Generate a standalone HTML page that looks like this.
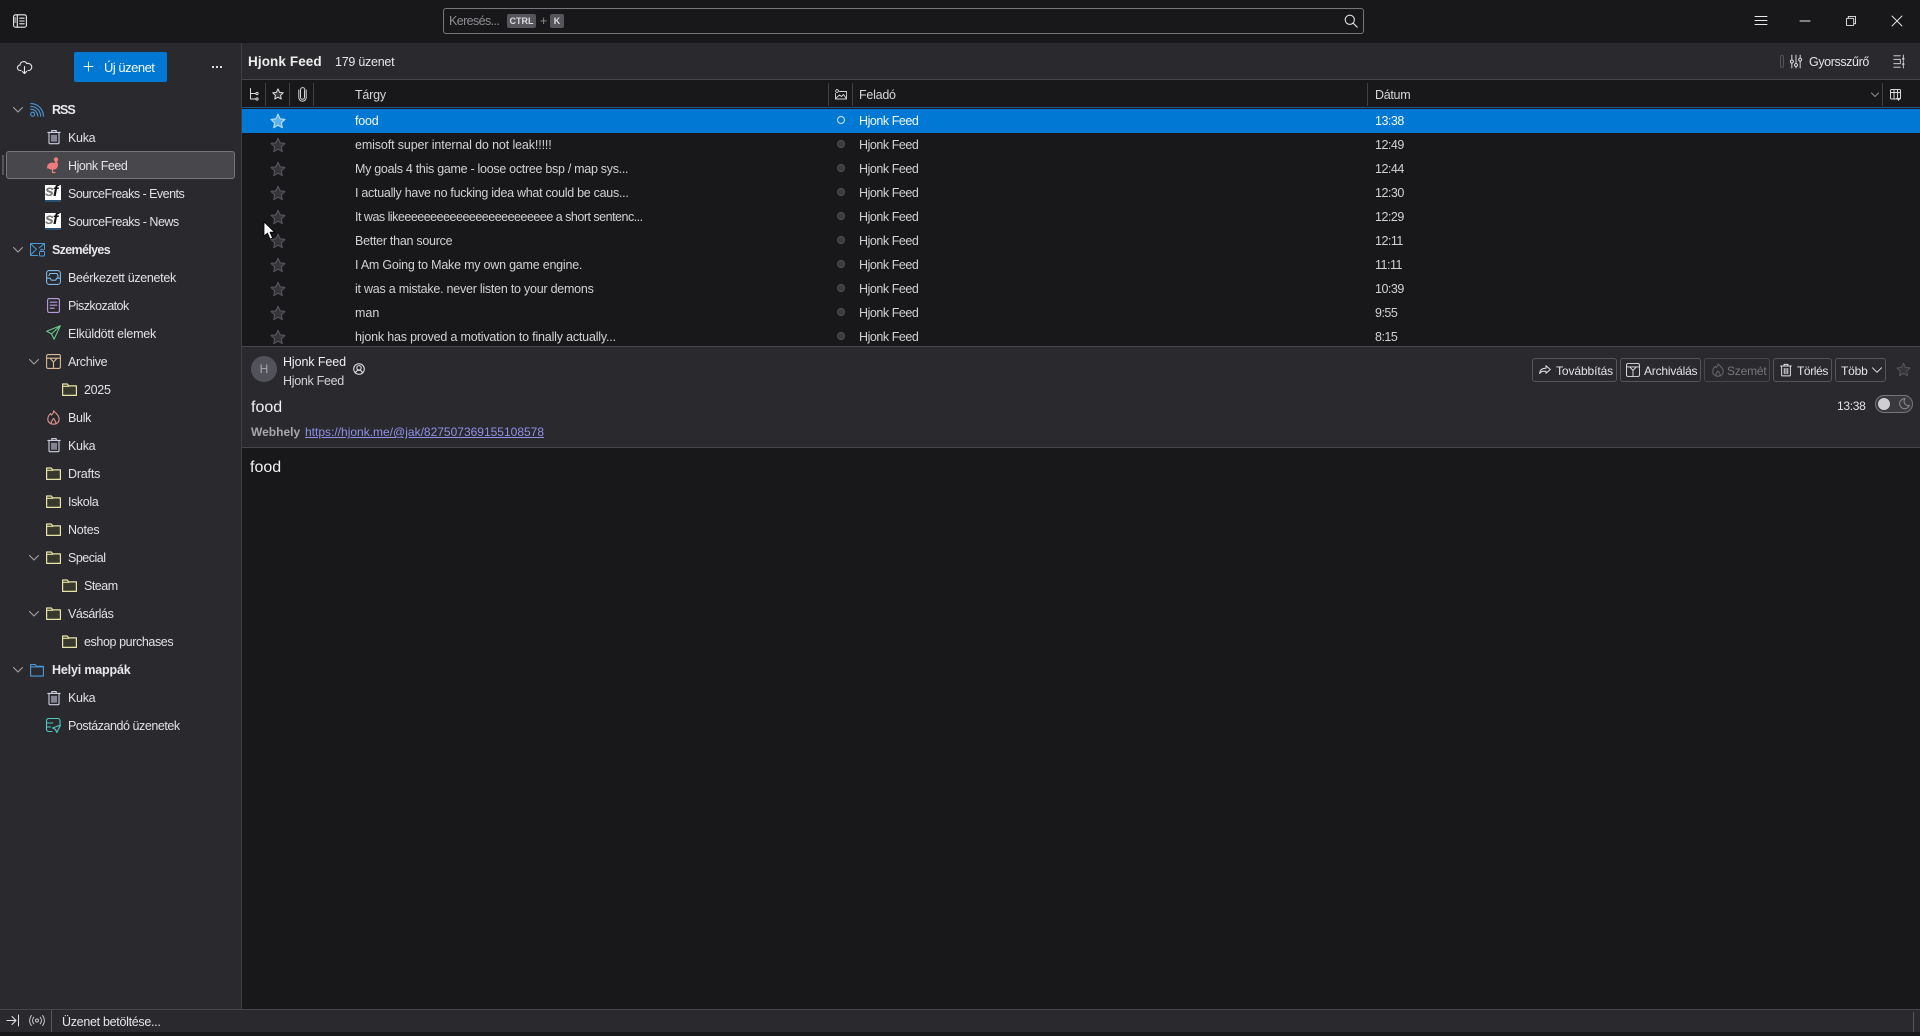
<!DOCTYPE html>
<html lang="hu"><head><meta charset="utf-8"><title>Hjonk Feed</title>
<style>
*{box-sizing:border-box}
html,body{margin:0;padding:0;width:1920px;height:1032px;overflow:hidden;background:#18181b;font-family:"Liberation Sans",sans-serif;font-size:12.5px;color:#e2e2e5}
.a{position:absolute}
.t{position:absolute;white-space:nowrap;height:28px;line-height:28px}
.b{font-weight:bold;color:#e8e8ea}
svg{position:absolute;overflow:visible;fill:none;stroke-linecap:round;stroke-linejoin:round}
.r{position:absolute;left:242px;width:1678px;height:24px;line-height:24px;color:#d2d2d5}
.r span{position:absolute;white-space:nowrap}
.r .s{left:113px}.r .f{left:617px;letter-spacing:-.45px}.r .d{left:1133px;letter-spacing:-.5px}
.r svg{left:28px;top:3.5px}
.r i{position:absolute;left:595px;top:7px;width:8px;height:8px;border-radius:50%;border:1.5px solid #505055;background:#3a3a3e}
.sel{background:#0078d4;color:#f4faff}
.sel i{border-color:#cfe6fa;background:#0078d4}
.sep{position:absolute;top:83px;height:23px;width:1px;background:#3f3f44}
.btn{position:absolute;top:358px;height:24px;border:1px solid #55555a;border-radius:3px;line-height:22px;white-space:nowrap;color:#e4e4e7}
.btn span{position:absolute;top:1px;font-size:12px}
</style></head><body>
<svg width="0" height="0" style="position:absolute"><defs>
<symbol id="chev" viewBox="0 0 12 12"><path d="M1.5 3.5 6 8l4.5-4.5" stroke="#a8a8ac" stroke-width="1"/></symbol>
<symbol id="fold" viewBox="0 0 15 15"><path d="M.6 2h4.700l1.500 1.900h7.600v9.500H.6z" fill="#38382e" stroke="#e8e4a8" stroke-width="1.200"/><path d="M.8 4.300h6" stroke="#e8e4a8" stroke-width="1.100"/></symbol>
<symbol id="trash" viewBox="0 0 16 16"><path d="M1.800 3.400h12.400M5.800 3.200V1.600h4.400v1.600M3 3.600v10.200c0 .5.400.9.900.9h8.200c.5 0 .9-.4.900-.9V3.600M6 6.300v6M10 6.300v6M8 6.300v6" stroke="#cfcfe6" stroke-width="1.100"/></symbol>
<symbol id="star" viewBox="0 0 16 16"><path d="M8 1.200 10.100 5.800l4.900.6-3.600 3.400.9 4.900L8 12.200l-4.300 2.500.9-4.900L1 6.400l4.900-.6z" fill="#36363a" stroke="#55555a" stroke-width="1.100"/></symbol>
<symbol id="starS" viewBox="0 0 16 16"><path d="M8 1.200 10.100 5.800l4.900.6-3.600 3.400.9 4.900L8 12.200l-4.300 2.500.9-4.900L1 6.400l4.900-.6z" fill="#5fb0ee" stroke="#bfe0fa" stroke-width="1.100"/></symbol>
</defs></svg>

<!-- top bar -->
<div class="a" style="left:0;top:0;width:1920px;height:43px;background:#18181b"></div>
<svg style="left:13px;top:14px" width="14" height="14" viewBox="0 0 14 14" stroke="#eee" stroke-width="1.100"><rect x=".6" y=".8" width="12.800" height="12.400" rx="2"/><path d="M4.300 1v12M6.600 4.200h4.600M6.600 7h4.600M6.600 9.800h4.600M1.800 4h1M1.800 6h1M1.800 8h1"/></svg>
<div class="a" style="left:443px;top:8px;width:921px;height:26px;border:1px solid #77777b;border-radius:3px"></div>
<div class="t" style="left:449px;top:7px;color:#8e8e92;letter-spacing:-.6px">Keresés...</div>
<div class="a" style="left:507px;top:14px;width:29px;height:14px;background:#55555b;border-radius:2px;color:#dcdce0;font-size:9px;font-weight:bold;line-height:14px;text-align:center">CTRL</div>
<div class="t" style="left:540px;top:7px;color:#8e8e92">+</div>
<div class="a" style="left:550px;top:14px;width:14px;height:14px;background:#55555b;border-radius:2px;color:#dcdce0;font-size:9px;font-weight:bold;line-height:14px;text-align:center">K</div>
<svg style="left:1344px;top:14px" width="14" height="14" viewBox="0 0 14 14" stroke="#dedee0" stroke-width="1.100"><circle cx="5.800" cy="5.800" r="4.600"/><path d="m9.200 9.200 4 4"/></svg>
<svg style="left:1755px;top:16px" width="12" height="9" viewBox="0 0 12 9" stroke="#e8e8ea" stroke-width="1"><path d="M0 .5h12M0 4.500h12M0 8.500h12"/></svg>
<svg style="left:1800px;top:15px" width="10" height="12" viewBox="0 0 10 12" stroke="#e8e8ea" stroke-width="1"><path d="M0 6h10"/></svg>
<svg style="left:1846px;top:16px" width="10" height="10" viewBox="0 0 11 11" stroke="#e8e8ea" stroke-width="1"><rect x=".5" y="2.500" width="8" height="8" rx="1"/><path d="M2.500 2.500V.5h8v8H8.500"/></svg>
<svg style="left:1892px;top:16px" width="10" height="10" viewBox="0 0 10 10" stroke="#e8e8ea" stroke-width=".9"><path d="m0 0 10 10M10 0 0 10"/></svg>

<!-- sidebar -->
<div class="a" style="left:0;top:43px;width:242px;height:966px;background:#2a2a2e;border-right:1px solid #3d3d42"></div>
<svg style="left:17px;top:60px" width="15" height="15" viewBox="0 0 15 15" stroke="#e6e6e8" stroke-width="1.100"><path d="M4 10.500H3.200A2.700 2.700 0 0 1 3 5.100 3.600 3.600 0 0 1 9.800 3.600a3.200 3.200 0 0 1 2.600 6.900H11"/><path d="M7.500 6.500v7M5.300 11.400l2.200 2.200 2.200-2.200"/></svg>
<div class="a" style="left:74px;top:52px;width:93px;height:30px;background:#0078d4;border-radius:2px"></div>
<svg style="left:84px;top:62px" width="9" height="9" viewBox="0 0 10 10" stroke="#fff" stroke-width="1"><path d="M5 0v10M0 5h10"/></svg>
<div class="t" style="left:104px;top:54px;color:#f4f9fe;font-size:13px;letter-spacing:-.5px">Új üzenet</div>
<div class="a" style="left:212px;top:66px;width:2px;height:2px;background:#dcdce0"></div>
<div class="a" style="left:216px;top:66px;width:2px;height:2px;background:#dcdce0"></div>
<div class="a" style="left:220px;top:66px;width:2px;height:2px;background:#dcdce0"></div>

<div class="a" style="left:6px;top:151px;width:229px;height:28px;background:#48484c;border:1px solid #77777b;border-radius:3px"></div>
<div class="a" style="left:2px;top:155px;width:2px;height:20px;background:#55555a"></div>

<!-- chevrons -->
<svg style="left:12px;top:104px" width="12" height="12"><use href="#chev"/></svg>
<svg style="left:12px;top:244px" width="12" height="12"><use href="#chev"/></svg>
<svg style="left:28px;top:356px" width="12" height="12"><use href="#chev"/></svg>
<svg style="left:28px;top:552px" width="12" height="12"><use href="#chev"/></svg>
<svg style="left:28px;top:608px" width="12" height="12"><use href="#chev"/></svg>
<svg style="left:12px;top:664px" width="12" height="12"><use href="#chev"/></svg>

<!-- RSS -->
<svg style="left:30px;top:102px" width="15" height="15" viewBox="0 0 15 15" stroke="#4a9ad8" stroke-width="1.100"><circle cx="2.700" cy="12.200" r="2"/><path d="M.8 7.200a7 7 0 0 1 7 7M.8 4.400a9.800 9.800 0 0 1 9.800 9.800M.8 1.600a12.600 12.600 0 0 1 12.600 12.600"/></svg>
<div class="t b" style="left:52px;top:96px;letter-spacing:-1px">RSS</div>
<svg style="left:46px;top:129px" width="16" height="16"><use href="#trash"/></svg>
<div class="t" style="left:68px;top:124px;letter-spacing:-.3px">Kuka</div>
<svg style="left:46px;top:156px" width="14" height="18" viewBox="0 0 14 18" fill="#ee7c7c"><circle cx="10" cy="3.500" r="2.200" fill="#ee7c7c"/><path d="M10 4v1.500c0 1.300 1 1.800 1 3.500" stroke="#ee7c7c" stroke-width="2.200"/><ellipse cx="6.500" cy="10.200" rx="5.200" ry="3.600" fill="#ee7c7c"/><path d="M1.500 10 .8 12.500 4 12z" fill="#ee7c7c"/><path d="M6.500 13v3.500h2.500" stroke="#ee7c7c" stroke-width="1.200"/></svg>
<div class="t" style="left:68px;top:152px;letter-spacing:-.45px">Hjonk Feed</div>
<div class="a" style="left:45px;top:185px;width:16px;height:17px;background:#fff;border-bottom:2px solid #2a5070;overflow:hidden"><div class="a" style="left:0;top:-1px;font:italic bold 16px/16px 'Liberation Sans',sans-serif;color:#111;letter-spacing:-1px"><span style="color:#777">s</span>f</div></div>
<div class="t" style="left:68px;top:180px;letter-spacing:-.52px">SourceFreaks - Events</div>
<div class="a" style="left:45px;top:213px;width:16px;height:17px;background:#fff;border-bottom:2px solid #2a5070;overflow:hidden"><div class="a" style="left:0;top:-1px;font:italic bold 16px/16px 'Liberation Sans',sans-serif;color:#111;letter-spacing:-1px"><span style="color:#777">s</span>f</div></div>
<div class="t" style="left:68px;top:208px;letter-spacing:-.5px">SourceFreaks - News</div>

<!-- Személyes -->
<svg style="left:30px;top:242px" width="15" height="15" viewBox="0 0 15 15" stroke="#4a9ad8" stroke-width="1"><path d="M7.500 13.500H.5V1.500h14v6"/><path d="m.8 2 5.700 5.200L.8 12.800M14 2 9 6"/><rect x="9.500" y="9.500" width="5" height="4.500" rx=".6"/><path d="M10.800 9.500V8.500a1.200 1.200 0 0 1 2.400 0v1"/></svg>
<div class="t b" style="left:52px;top:236px;letter-spacing:-.66px">Személyes</div>

<svg style="left:46px;top:270px" width="15" height="15" viewBox="0 0 15 15" stroke="#7cb8e8" stroke-width="1.100"><rect x=".6" y=".6" width="13.800" height="13.800" rx="2.500"/><path d="M.8 8.200h3.500l1 2h4.400l1-2h3.500M3 5.500l1-2h7l1 2v2.700"/></svg>
<div class="t" style="left:68px;top:264px;letter-spacing:-.32px">Beérkezett üzenetek</div>
<svg style="left:47px;top:298px" width="13" height="15" viewBox="0 0 13 15" stroke="#b79be0" stroke-width="1.100"><rect x=".6" y=".6" width="11.800" height="13.800" rx="1.500"/><path d="M3.200 4.200h6.600M3.200 7.200h6.600M3.200 10.200h4"/></svg>
<div class="t" style="left:68px;top:292px;letter-spacing:-.55px">Piszkozatok</div>
<svg style="left:46px;top:325px" width="15" height="15" viewBox="0 0 15 15" stroke="#6cc98e" stroke-width="1.100"><path d="M14.300.8.700 6.300l4.800 2.600 2.600 5.300zM14.300.8 5.500 8.900"/></svg>
<div class="t" style="left:68px;top:320px;letter-spacing:-.23px">Elküldött elemek</div>
<svg style="left:46px;top:354px" width="15" height="15" viewBox="0 0 15 15" stroke="#d9bb95" stroke-width="1.100"><rect x=".6" y=".6" width="13.800" height="13.800" rx="1.500"/><path d="M.8 4.200h13.400M4 4.200 7.500 8l3.500-3.800M7.500 8v6"/></svg>
<div class="t" style="left:68px;top:348px;letter-spacing:-.35px">Archive</div>
<svg style="left:62px;top:382px" width="15" height="15"><use href="#fold"/></svg>
<div class="t" style="left:84px;top:376px;letter-spacing:-.3px">2025</div>
<svg style="left:47px;top:410px" width="13" height="15" viewBox="0 0 13 15" stroke="#e09090" stroke-width="1.100"><path d="M6.500.8c.5 2-1 3-2 4.200-.5-.5-.8-1-1-1.500C1.800 5.200.8 7 .8 9.200c0 3 2.500 5 5.700 5s5.700-2 5.700-5C12.200 5.500 8.800 3 6.500.8z"/><path d="M4.300 14c-.8-2 .8-3.500 2.200-5.500 1.400 2 3 3.500 2.200 5.500"/></svg>
<div class="t" style="left:68px;top:404px;letter-spacing:-.3px">Bulk</div>
<svg style="left:46px;top:437px" width="16" height="16"><use href="#trash"/></svg>
<div class="t" style="left:68px;top:432px;letter-spacing:-.3px">Kuka</div>
<svg style="left:46px;top:466px" width="15" height="15"><use href="#fold"/></svg>
<div class="t" style="left:68px;top:460px;letter-spacing:-.2px">Drafts</div>
<svg style="left:46px;top:494px" width="15" height="15"><use href="#fold"/></svg>
<div class="t" style="left:68px;top:488px;letter-spacing:-.4px">Iskola</div>
<svg style="left:46px;top:522px" width="15" height="15"><use href="#fold"/></svg>
<div class="t" style="left:68px;top:516px;letter-spacing:-.25px">Notes</div>
<svg style="left:46px;top:550px" width="15" height="15"><use href="#fold"/></svg>
<div class="t" style="left:68px;top:544px;letter-spacing:-.5px">Special</div>
<svg style="left:62px;top:578px" width="15" height="15"><use href="#fold"/></svg>
<div class="t" style="left:84px;top:572px;letter-spacing:-.5px">Steam</div>
<svg style="left:46px;top:606px" width="15" height="15"><use href="#fold"/></svg>
<div class="t" style="left:68px;top:600px;letter-spacing:-.4px">Vásárlás</div>
<svg style="left:62px;top:634px" width="15" height="15"><use href="#fold"/></svg>
<div class="t" style="left:84px;top:628px;letter-spacing:-.4px">eshop purchases</div>
<svg style="left:30px;top:663px" width="14" height="14" viewBox="0 0 14 14" stroke="#4a9ad8" stroke-width="1.100"><path d="M.6 1.500h4.600l1.400 1.800h6.800v9.800H.6zM.8 3.800h12.400"/></svg>
<div class="t b" style="left:52px;top:656px;letter-spacing:-.17px">Helyi mappák</div>
<svg style="left:46px;top:690px" width="16" height="16"><use href="#trash"/></svg>
<div class="t" style="left:68px;top:684px;letter-spacing:-.3px">Kuka</div>
<svg style="left:46px;top:718px" width="15" height="15" viewBox="0 0 15 15" stroke="#4fc8c0" stroke-width="1.100"><path d="M6 13.500H2.500a2 2 0 0 1-2-2v-9a2 2 0 0 1 2-2H12a2 2 0 0 1 2 2V6"/><path d="M.8 5h6M.8 9h4M14.500 7l-8 3 3 1.400 1.300 3.100z"/></svg>
<div class="t" style="left:68px;top:712px;letter-spacing:-.45px">Postázandó üzenetek</div>

<!-- title bar -->
<div class="a" style="left:242px;top:43px;width:1678px;height:37px;background:#2a2a2e;border-bottom:1px solid #45454a"></div>
<div class="t" style="left:248px;top:48px;font-weight:bold;font-size:13.500px;color:#eee;letter-spacing:.1px">Hjonk Feed</div>
<div class="t" style="left:335px;top:48px;color:#e6e6e8;letter-spacing:-.25px">179 üzenet</div>
<div class="a" style="left:1780px;top:55px;width:4px;height:13px;border:1px solid #55555a;border-radius:2px"></div>
<svg style="left:1790px;top:55px" width="12" height="13" viewBox="0 0 13 14" stroke="#e4e4e6" stroke-width="1"><path d="M2 0v5M2 9v5M6.500 0v9M6.500 12.500V14M11 0v3M11 7v7"/><circle cx="2" cy="7" r="1.600"/><circle cx="6.500" cy="10.800" r="1.600"/><circle cx="11" cy="5" r="1.600"/></svg>
<div class="t" style="left:1809px;top:48px;color:#e4e4e6;letter-spacing:-.4px">Gyorsszűrő</div>
<svg style="left:1893px;top:55px" width="12" height="13" viewBox="0 0 12 15" stroke="#e4e4e6" stroke-width="1"><path d="M0 1h7.500M0 14h7.500M0 5h7.500v5H0M11 0v3M11 6.500V8.500M11 12v3"/><circle cx="11" cy="4.500" r=".8"/><circle cx="11" cy="10.500" r=".8"/></svg>

<!-- column header -->
<div class="a" style="left:242px;top:107px;width:1678px;height:1px;background:#1f5a8a"></div>
<div class="sep" style="left:265px"></div><div class="sep" style="left:289px"></div><div class="sep" style="left:313px"></div>
<div class="sep" style="left:828px"></div><div class="sep" style="left:852px"></div><div class="sep" style="left:1367px"></div><div class="sep" style="left:1882px"></div>
<svg style="left:249px;top:88px" width="10" height="13" viewBox="0 0 10 13" stroke="#d8d8da" stroke-width="1"><path d="M1.500.5v10.500H7M1.500 5.500H7"/><circle cx="8" cy="5.500" r="1.100"/><circle cx="8" cy="11" r="1.100"/></svg>
<svg style="left:272px;top:88px" width="12" height="12" viewBox="0 0 16 16"><path d="M8 1.200 10.100 5.800l4.900.6-3.600 3.400.9 4.900L8 12.200l-4.300 2.500.9-4.900L1 6.400l4.900-.6z" stroke="#d8d8da" stroke-width="1.400" fill="#3a3a3e"/></svg>
<svg style="left:298px;top:87px" width="9" height="14" viewBox="0 0 9 14" stroke="#d8d8da" stroke-width="1"><path d="M6.500 3.500v6.800a2 2 0 0 1-4 0V2.800a2.200 2.200 0 0 1 4.400 0M.8 3v7.500a3.600 3.600 0 0 0 7.400 0V3"/></svg>
<div class="t" style="left:355px;top:81px;color:#d6d6d8;letter-spacing:-.2px">Tárgy</div>
<svg style="left:835px;top:89px" width="12" height="11" viewBox="0 0 12 11" stroke="#d8d8da" stroke-width=".9"><circle cx="2" cy="2" r="1.400"/><path d="M4.500 2.500h7v7.500H.5V4.500M1 9l3.500-3 2 1.500 2-2 2.500 3.500"/></svg>
<div class="t" style="left:859px;top:81px;color:#d6d6d8;letter-spacing:-.25px">Feladó</div>
<div class="t" style="left:1375px;top:81px;color:#d6d6d8;letter-spacing:-.3px">Dátum</div>
<svg style="left:1871px;top:92px" width="8" height="6" viewBox="0 0 8 6" stroke="#8f8f93" stroke-width="1"><path d="m.5 1 3.500 3.500L7.500 1"/></svg>
<svg style="left:1890px;top:89px" width="11" height="12" viewBox="0 0 11 12" stroke="#d8d8da" stroke-width="1"><rect x=".5" y=".5" width="10" height="9.500" rx="1"/><path d="M.5 3.500h10M4 .5v9.500M7.500.5v9.500"/><path d="M6 9h5l-2.500 3z" fill="#d8d8da" stroke="none"/></svg>

<!-- rows -->
<div class="a" style="left:0;top:108px;width:1920px;height:238px;overflow:hidden">
<div class="r sel" style="top:1px"><svg width="16" height="16"><use href="#starS"/></svg><span class="s" style="letter-spacing:-.2px">food</span><i></i><span class="f">Hjonk Feed</span><span class="d">13:38</span></div>
<div class="r" style="top:25px"><svg width="16" height="16"><use href="#star"/></svg><span class="s" style="letter-spacing:-.125px">emisoft super internal do not leak!!!!!</span><i></i><span class="f">Hjonk Feed</span><span class="d">12:49</span></div>
<div class="r" style="top:49px"><svg width="16" height="16"><use href="#star"/></svg><span class="s" style="letter-spacing:-.29px">My goals 4 this game - loose octree bsp / map sys...</span><i></i><span class="f">Hjonk Feed</span><span class="d">12:44</span></div>
<div class="r" style="top:73px"><svg width="16" height="16"><use href="#star"/></svg><span class="s" style="letter-spacing:-.28px">I actually have no fucking idea what could be caus...</span><i></i><span class="f">Hjonk Feed</span><span class="d">12:30</span></div>
<div class="r" style="top:97px"><svg width="16" height="16"><use href="#star"/></svg><span class="s" style="letter-spacing:-.5px">It was likeeeeeeeeeeeeeeeeeeeeeeee a short sentenc...</span><i></i><span class="f">Hjonk Feed</span><span class="d">12:29</span></div>
<div class="r" style="top:121px"><svg width="16" height="16"><use href="#star"/></svg><span class="s" style="letter-spacing:-.27px">Better than source</span><i></i><span class="f">Hjonk Feed</span><span class="d">12:11</span></div>
<div class="r" style="top:145px"><svg width="16" height="16"><use href="#star"/></svg><span class="s" style="letter-spacing:-.22px">I Am Going to Make my own game engine.</span><i></i><span class="f">Hjonk Feed</span><span class="d">11:11</span></div>
<div class="r" style="top:169px"><svg width="16" height="16"><use href="#star"/></svg><span class="s" style="letter-spacing:-.24px">it was a mistake. never listen to your demons</span><i></i><span class="f">Hjonk Feed</span><span class="d">10:39</span></div>
<div class="r" style="top:193px"><svg width="16" height="16"><use href="#star"/></svg><span class="s">man</span><i></i><span class="f">Hjonk Feed</span><span class="d">9:55</span></div>
<div class="r" style="top:217px"><svg width="16" height="16"><use href="#star"/></svg><span class="s" style="letter-spacing:-.19px">hjonk has proved a motivation to finally actually...</span><i></i><span class="f">Hjonk Feed</span><span class="d">8:15</span></div>
</div>

<!-- message header -->
<div class="a" style="left:242px;top:346px;width:1678px;height:102px;background:#2a2a2e;border-top:1px solid #45454a;border-bottom:1px solid #45454a"></div>
<div class="a" style="left:251px;top:356px;width:26px;height:26px;border-radius:50%;background:#52525b;color:#a8a8ae;font-size:12px;line-height:26px;text-align:center">H</div>
<div class="t" style="left:283px;top:348px;color:#f0f0f2;letter-spacing:-.1px">Hjonk Feed</div>
<div class="t" style="left:283px;top:367px;color:#d4d4d6;letter-spacing:-.3px">Hjonk Feed</div>
<svg style="left:353px;top:363px" width="12" height="12" viewBox="0 0 12 12" stroke="#e8e8ea" stroke-width="1"><circle cx="6" cy="6" r="5.300"/><circle cx="6" cy="4.800" r="2.200"/><path d="M2.500 10c.5-2 1.800-2.800 3.500-2.800S9 8 9.500 10"/></svg>
<div class="t" style="left:251px;top:394px;font-size:16px;color:#f2f2f4">food</div>
<div class="t" style="left:251px;top:418px;font-size:12px;font-weight:bold;color:#a8a8ac">Webhely</div>
<div class="t" style="left:305px;top:418px;font-size:12px;color:#9090e8;text-decoration:underline">https://hjonk.me/@jak/827507369155108578</div>

<div class="btn" style="left:1532px;width:85px"><svg style="left:6px;top:6px" width="12" height="10" viewBox="0 0 12 10" stroke="#e4e4e7" stroke-width="1"><path d="M7 .8 11.300 4.500 7 8.200V6.200H4.500c-1.500 0-2.700.8-3.800 2.300.2-3 1.800-5.200 6.300-5.200z"/></svg><span style="left:23px;letter-spacing:-.1px">Továbbítás</span></div>
<div class="btn" style="left:1620px;width:81px"><svg style="left:5px;top:4px" width="14" height="14" viewBox="0 0 15 15" stroke="#e4e4e7" stroke-width="1"><rect x=".6" y=".6" width="13.800" height="13.800" rx="1.500"/><path d="M.8 4.200h13.400M4 4.200 7.500 8l3.500-3.800M7.500 8v6"/></svg><span style="left:23px;letter-spacing:-.2px">Archiválás</span></div>
<div class="btn" style="left:1704px;width:66px;color:#77777b;border-color:#48484c"><svg style="left:7px;top:4px" width="12" height="14" viewBox="0 0 13 15" stroke="#66666a" stroke-width="1.100"><path d="M6.500.8c.5 2-1 3-2 4.200-.5-.5-.8-1-1-1.500C1.800 5.200.8 7 .8 9.200c0 3 2.500 5 5.700 5s5.700-2 5.700-5C12.200 5.500 8.800 3 6.500.8z"/><path d="M4.300 14c-.8-2 .8-3.500 2.200-5.500 1.400 2 3 3.500 2.200 5.500"/></svg><span style="left:22px;letter-spacing:-.2px">Szemét</span></div>
<div class="btn" style="left:1773px;width:59px"><svg style="left:5px;top:4px" width="14" height="14" viewBox="0 0 16 16" stroke="#e4e4e7" stroke-width="1.100"><path d="M1.800 3.400h12.400M5.800 3.200V1.600h4.400v1.600M3 3.600v10.200c0 .5.400.9.900.9h8.200c.5 0 .9-.4.900-.9V3.600M6 6.300v6M10 6.300v6M8 6.300v6"/></svg><span style="left:23px;letter-spacing:-.4px">Törlés</span></div>
<div class="btn" style="left:1835px;width:51px"><span style="left:5px;letter-spacing:-.2px">Több</span><svg style="left:36px;top:8px" width="10" height="6" viewBox="0 0 10 6" stroke="#e4e4e7" stroke-width="1"><path d="m.5.8 4.500 4.500L9.500.8"/></svg></div>
<svg style="left:1896px;top:362px" width="15" height="15"><use href="#star"/></svg>
<div class="t" style="left:1837px;top:392px;font-size:12px;color:#e4e4e7;letter-spacing:-.3px">13:38</div>
<div class="a" style="left:1875px;top:395px;width:38px;height:18px;border:1px solid #77777b;border-radius:9px;background:#3a3a3e"></div>
<div class="a" style="left:1878px;top:398px;width:12px;height:12px;border-radius:50%;background:#cfcfd3"></div>
<svg style="left:1899px;top:398px" width="11" height="11" viewBox="0 0 11 11" stroke="#8e8e92" stroke-width="1"><path d="M6 .7a5 5 0 1 0 4.300 6.800A4.300 4.300 0 0 1 6 .7z"/></svg>

<!-- body -->
<div class="t" style="left:250px;top:454px;font-size:16px;color:#f2f2f4">food</div>

<!-- status bar -->
<div class="a" style="left:0;top:1009px;width:1920px;height:23px;background:#2a2a2e;border-top:1px solid #45454a"></div>
<svg style="left:7px;top:1015px" width="12" height="11" viewBox="0 0 12 11" stroke="#e4e4e6" stroke-width="1"><path d="M0 5.500h8.500M5 1.500l4 4-4 4M11.500 0v11"/></svg>
<svg style="left:29px;top:1015px" width="16" height="11" viewBox="0 0 16 11" stroke="#c8c8cc" stroke-width="1"><circle cx="8" cy="5.500" r="1.500"/><path d="M4.800 2.200a5 5 0 0 0 0 6.600M11.200 2.200a5 5 0 0 1 0 6.600M2.400.5a8 8 0 0 0 0 10M13.600.5a8 8 0 0 1 0 10"/></svg>
<div class="a" style="left:51px;top:1010px;width:1px;height:22px;background:#55555a"></div>
<div class="t" style="left:62px;top:1008px;color:#e6e6e8;letter-spacing:-.3px">Üzenet betöltése...</div>
<div class="a" style="left:1913px;top:1012px;width:1px;height:20px;background:#55555a"></div>

<!-- cursor -->
<svg style="left:263px;top:221px" width="13" height="19" viewBox="0 0 13 19"><path d="M1 1v14l3.500-3 2.500 6 2.500-1-2.500-5.800h4.700z" fill="#fff" stroke="#000" stroke-width=".8" stroke-linecap="butt"/></svg>
</body></html>
